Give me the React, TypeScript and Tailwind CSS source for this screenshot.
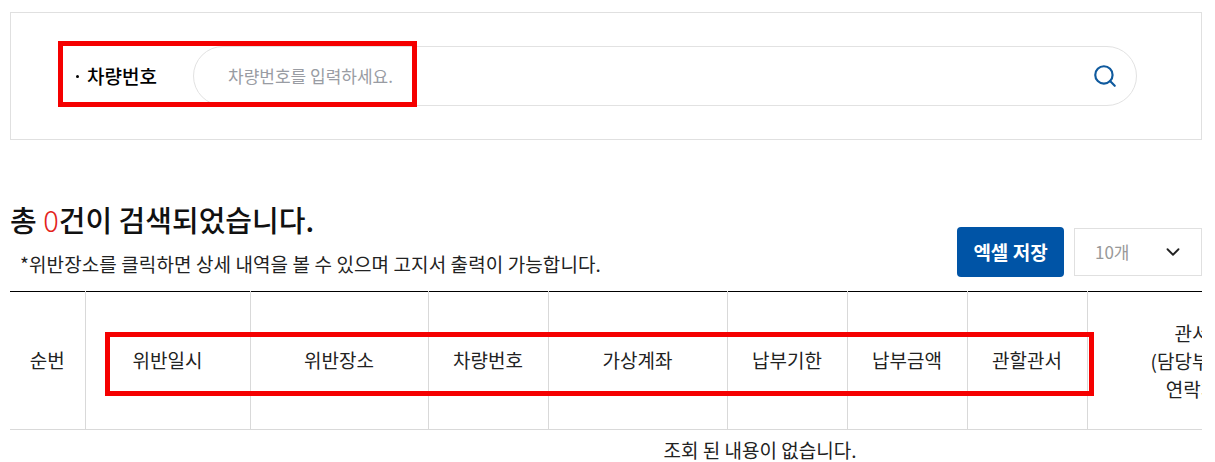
import React from 'react';
import { ChevronDown, Search } from 'lucide-react';

const columns = [
  { label: '순번', width: 'w-[75px]' },
  { label: '위반일시', width: 'w-[165px]' },
  { label: '위반장소', width: 'w-[178px]' },
  { label: '차량번호', width: 'w-[120px]' },
  { label: '가상계좌', width: 'w-[179px]' },
  { label: '납부기한', width: 'w-[120px]' },
  { label: '납부금액', width: 'w-[120px]' },
  { label: '관할관서', width: 'w-[120px]' },
];

const App: React.FC = () => {
  return (
    <div className="relative h-[462px] w-[1215px] overflow-hidden bg-white pl-[10px] pr-[13px] pt-[12px] font-['Noto_Sans_CJK_KR','Noto_Sans',sans-serif] text-[#111]">
      {/* Search box */}
      <div className="flex h-[128px] items-center border border-[#e0e0e0] pl-[65px] pr-[64px]">
        <span className="mr-[8px] h-[3px] w-[3px] rounded-full bg-black" />
        <label className="w-[106px] text-[19px] font-medium text-black">차량번호</label>
        <div className="flex h-[60px] flex-1 items-center justify-between rounded-full border border-[#e2e2e2] pl-[34px] pr-[18px]">
          <span className="text-[17px] text-[#999ca3]">차량번호를 입력하세요.</span>
          <Search className="h-[26px] w-[26px] text-[#0f5a9e]" strokeWidth={2} />
        </div>
      </div>

      {/* Result summary */}
      <div className="mt-[60px] flex h-[91px] items-end justify-between pb-[14px]">
        <div>
          <h2 className="text-[29px] font-medium leading-[40px] text-[#111]">
            총 <span className="font-light text-[#e3231b]">0</span>건이 검색되었습니다.
          </h2>
          <p className="-mb-[1px] mt-[11px] pl-[10px] text-[19px] leading-[28px] tracking-[0.1px] text-[#222]">
            *위반장소를 클릭하면 상세 내역을 볼 수 있으며 고지서 출력이 가능합니다.
          </p>
        </div>
        <div className="flex items-center gap-[10px]">
          <button className="h-[50px] w-[107px] rounded-[4px] bg-[#0054a6] text-[19px] font-bold text-white">
            엑셀 저장
          </button>
          <div className="flex h-[48px] w-[128px] items-center justify-between border border-[#e0e0e0] pl-[20px] pr-[17px]">
            <span className="text-[17px] text-[#999]">10개</span>
            <ChevronDown className="h-[22px] w-[22px] text-[#222]" strokeWidth={2} />
          </div>
        </div>
      </div>

      {/* Table, wider than its wrapper and cut off on the right */}
      <div className="overflow-hidden">
        <table className="w-[1500px] table-fixed border-collapse border-t border-black text-[19px] text-[#222]">
          <thead>
            <tr className="h-[138px] border-b border-[#d9d9d9]">
              {columns.map((col) => (
                <th key={col.label} className={`${col.width} border-r border-[#d9d9d9] font-normal`}>
                  {col.label}
                </th>
              ))}
              <th className="w-[210px] border-r border-[#d9d9d9] font-normal leading-[28px]">
                관서
                <br />
                (담당부서)
                <br />
                연락처
              </th>
              <th className="w-[213px] font-normal" />
            </tr>
          </thead>
          <tbody>
            <tr>
              <td colSpan={10} className="h-[40px] text-center">
                조회 된 내용이 없습니다.
              </td>
            </tr>
          </tbody>
        </table>
      </div>

      {/* Red annotation boxes */}
      <div className="absolute left-[58px] top-[41px] h-[66px] w-[359px] border-[5px] border-[#f50000]" />
      <div className="absolute left-[105px] top-[332px] h-[64px] w-[989px] border-[5px] border-[#f50000]" />
    </div>
  );
};

export default App;
